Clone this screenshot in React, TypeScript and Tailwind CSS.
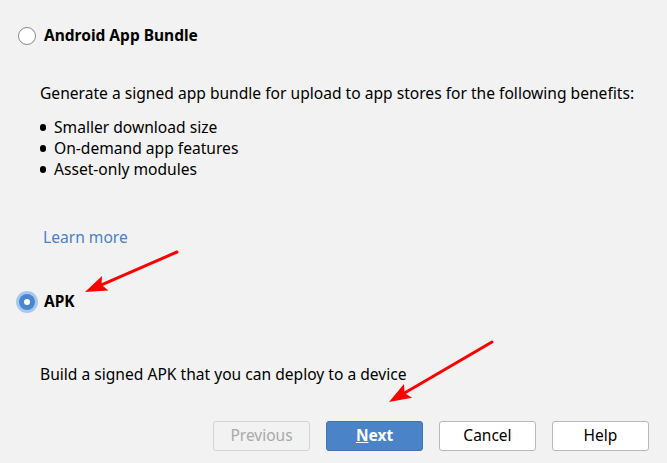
const font = { fontFamily: '"Noto Sans", "Open Sans", sans-serif' };

const Radio = ({ checked }: { checked?: boolean }) =>
  checked ? (
    <span className="flex h-[22px] w-[22px] items-center justify-center rounded-full bg-[#a9c8ee]">
      <span className="flex h-[16px] w-[16px] items-center justify-center rounded-full bg-[#4a86cf]">
        <span className="h-[6px] w-[6px] rounded-full bg-white" />
      </span>
    </span>
  ) : (
    <span className="flex h-[22px] w-[22px] items-center justify-center">
      <span className="h-[18px] w-[18px] rounded-full border border-[#8a8a8a] bg-white" />
    </span>
  );

const Arrow = ({ x1, y1, x2, y2 }: { x1: number; y1: number; x2: number; y2: number }) => {
  const a = Math.atan2(y2 - y1, x2 - x1);
  const len = 22;
  const w = 8;
  const bx = x2 - len * Math.cos(a);
  const by = y2 - len * Math.sin(a);
  const px = -Math.sin(a) * w;
  const py = Math.cos(a) * w;
  const sx = x2 - (len - 4) * Math.cos(a);
  const sy = y2 - (len - 4) * Math.sin(a);
  return (
    <g>
      <line x1={x1} y1={y1} x2={sx} y2={sy} stroke="#ff0000" strokeWidth="3" strokeLinecap="round" />
      <polygon points={`${x2},${y2} ${bx + px},${by + py} ${sx},${sy} ${bx - px},${by - py}`} fill="#ff0000" />
    </g>
  );
};

const Btn = ({ children, kind }: { children: React.ReactNode; kind?: 'primary' | 'disabled' }) => {
  const cls =
    kind === 'primary'
      ? 'bg-[#4a83c7] border-[#3d72b3] text-white font-bold'
      : kind === 'disabled'
        ? 'bg-[#f2f2f2] border-[#d4d4d4] text-[#a9a9a9]'
        : 'bg-white border-[#b8b8b8] text-black';
  return (
    <div className={`flex h-[30px] w-[97px] items-center justify-center rounded-[3px] border text-[15.5px] ${cls}`}>
      {children}
    </div>
  );
};

export default function App() {
  return (
    <div className="relative h-[463px] w-[667px] overflow-hidden bg-[#f2f2f2] text-black" style={font}>
      <div className="flex flex-col pl-[16px] pt-[24px]">
        <div className="flex items-center gap-[6px]">
          <Radio />
          <span className="text-[15.5px] font-bold">Android App Bundle</span>
        </div>
        <div className="pl-[24px] pt-[36px] text-[15.6px] leading-[21px]">
          <p>Generate a signed app bundle for upload to app stores for the following benefits:</p>
          <ul className="mt-[13px]">
            {['Smaller download size', 'On-demand app features', 'Asset-only modules'].map((t) => (
              <li key={t} className="flex items-center gap-[8px]">
                <span className="h-[7px] w-[6px] rounded-full bg-black" />
                {t}
              </li>
            ))}
          </ul>
          <p className="mt-[47px] pl-[3px] text-[#4b7fc8]">Learn more</p>
        </div>
        <div className="mt-[42px] flex items-center gap-[6px]">
          <Radio checked />
          <span className="text-[15.5px] font-bold">APK</span>
        </div>
        <p className="pl-[24px] pt-[50px] text-[15.6px] leading-[21px]">Build a signed APK that you can deploy to a device</p>
        <div className="mt-[36px] flex justify-end gap-[16px] pr-[18px]">
          <Btn kind="disabled">Previous</Btn>
          <Btn kind="primary">
            <span className="underline">N</span>ext
          </Btn>
          <Btn>Cancel</Btn>
          <Btn>Help</Btn>
        </div>
      </div>
      <svg className="pointer-events-none absolute left-0 top-0" width="667" height="463">
        <Arrow x1={177} y1={252} x2={85} y2={292} />
        <Arrow x1={492} y1={342} x2={389} y2={402} />
      </svg>
    </div>
  );
}
